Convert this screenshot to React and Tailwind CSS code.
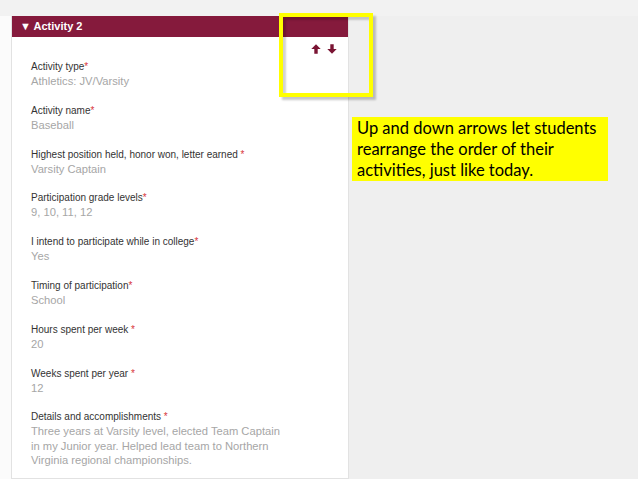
import React from 'react';

const fields = [
  { label: 'Activity type', value: ['Athletics: JV/Varsity'] },
  { label: 'Activity name', value: ['Baseball'] },
  { label: 'Highest position held, honor won, letter earned ', value: ['Varsity Captain'] },
  { label: 'Participation grade levels', value: ['9, 10, 11, 12'] },
  { label: 'I intend to participate while in college', value: ['Yes'] },
  { label: 'Timing of participation', value: ['School'] },
  { label: 'Hours spent per week ', value: ['20'] },
  { label: 'Weeks spent per year ', value: ['12'] },
  {
    label: 'Details and accomplishments ',
    value: [
      'Three years at Varsity level, elected Team Captain',
      'in my Junior year. Helped lead team to Northern',
      'Virginia regional championships.',
    ],
  },
];

function ArrowUp() {
  return (
    <svg width="10" height="10" viewBox="0 0 10 10">
      <path d="M5 0.3 L9.7 5 L6.7 5 L6.7 9.7 L3.3 9.7 L3.3 5 L0.3 5 Z" fill="#7a1433" />
    </svg>
  );
}

function ArrowDown() {
  return (
    <svg width="10" height="10" viewBox="0 0 10 10">
      <path d="M5 9.7 L9.7 5 L6.7 5 L6.7 0.3 L3.3 0.3 L3.3 5 L0.3 5 Z" fill="#7a1433" />
    </svg>
  );
}

export default function App() {
  return (
    <div className="relative w-[638px] h-[479px] overflow-hidden bg-[#efefef] font-['Liberation_Sans',Arial,sans-serif]">
      {/* Top strip */}
      <div className="h-[16px] bg-[#f2f2f2]" />

      <div className="flex h-[463px]">
        {/* Form column */}
        <div className="w-[349px] bg-[#fbfbfb] pl-[11px] flex flex-col">
          <div className="flex-1 bg-white border-l border-r border-[#e2e2e2] border-b flex flex-col">
            <div className="h-[21px] bg-[#851a3c] flex items-center pl-[8px] text-white text-[11px] font-bold">
              ▼ Activity 2
            </div>

            <div className="h-[23px] flex items-center justify-end gap-[6px] pr-[11px]">
              <ArrowUp />
              <ArrowDown />
            </div>

            <div className="pl-[19px] flex flex-col gap-[15.3px]">
              {fields.map((f) => (
                <div key={f.label}>
                  <div className="text-[10px] leading-[14px] text-[#333]">
                    {f.label}
                    <span className="text-[#d8363b]">*</span>
                  </div>
                  {f.value.map((line) => (
                    <div key={line} className="text-[11.2px] leading-[14.5px] text-[#a6a6a6]">
                      {line}
                    </div>
                  ))}
                </div>
              ))}
            </div>
          </div>
        </div>
        <div className="flex-1" />
      </div>

      {/* Highlight outline around arrows */}
      <div className="absolute left-[279px] top-[13px] w-[94px] h-[84px] border-[4px] border-[#ffff00] shadow-[3px_3px_2px_rgba(0,0,0,0.22),inset_3px_3px_2px_rgba(0,0,0,0.18)]" />

      {/* Callout */}
      <div className="absolute left-[352px] top-[117px] w-[256px] h-[64px] bg-[#ffff00] pl-[5px] pt-[1px] text-[16.5px] leading-[21px] text-black font-['Lato','Open_Sans',sans-serif]">
        Up and down arrows let students
        <br />
        rearrange the order of their
        <br />
        activities, just like today.
      </div>
    </div>
  );
}
